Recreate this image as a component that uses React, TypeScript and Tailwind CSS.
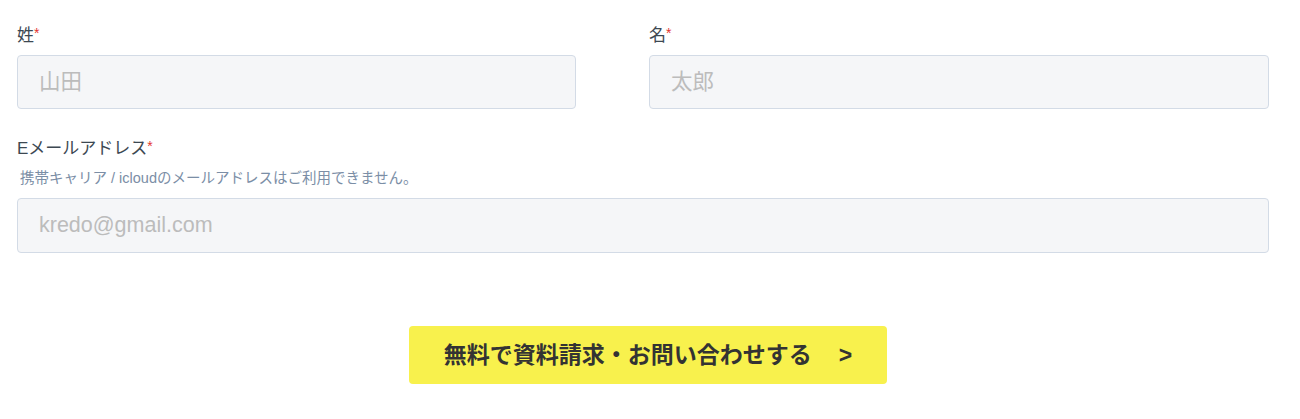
import React from "react";

const font = {
  fontFamily:
    '"Liberation Sans", "Noto Sans CJK JP", "Noto Sans", sans-serif',
};

function Label({ text }: { text: string }) {
  return (
    <div className="text-[17px] leading-[24px] text-[#3d4852]">
      {text}
      <span className="text-[#e3342f] text-[14px] align-top leading-[18px]">*</span>
    </div>
  );
}

function Input({ placeholder, className = "" }: { placeholder: string; className?: string }) {
  return (
    <input
      placeholder={placeholder}
      className={
        "block h-[54px] rounded-[4px] border border-[#d3dbe6] bg-[#f5f6f8] pl-[21px] text-[21.5px] text-[#333] outline-none placeholder:text-[#bcbcbc] " +
        className
      }
      style={font}
    />
  );
}

export default function App() {
  return (
    <div className="w-[1300px] h-[419px] bg-white pl-[17px] pr-[31px] pt-[24px]" style={font}>
      <div className="flex">
        <div className="w-[559px]">
          <Label text="姓" />
          <div className="mt-[7px]">
            <Input placeholder="山田" className="w-[559px]" />
          </div>
        </div>
        <div className="ml-[73px] w-[620px]">
          <Label text="名" />
          <div className="mt-[7px]">
            <Input placeholder="太郎" className="w-[620px]" />
          </div>
        </div>
      </div>
      <div className="mt-[28px]">
        <Label text="Eメールアドレス" />
        <div className="mt-[7px] pl-[3px] text-[14.5px] leading-[20px] text-[#7b8ea6]">
          携帯キャリア / icloudのメールアドレスはご利用できません。
        </div>
        <div className="mt-[10px]">
          <Input placeholder="kredo@gmail.com" className="w-full h-[55px]" />
        </div>
      </div>
      <div className="mt-[73px] flex justify-center pl-[10px]">
        <button
          className="flex h-[58px] w-[478px] items-center justify-center rounded-[4px] bg-[#f8f14d] text-[23px] font-bold text-[#333]"
          style={font}
        >
          <span>無料で資料請求・お問い合わせする</span>
          <span className="ml-[27px]">&gt;</span>
        </button>
      </div>
    </div>
  );
}
